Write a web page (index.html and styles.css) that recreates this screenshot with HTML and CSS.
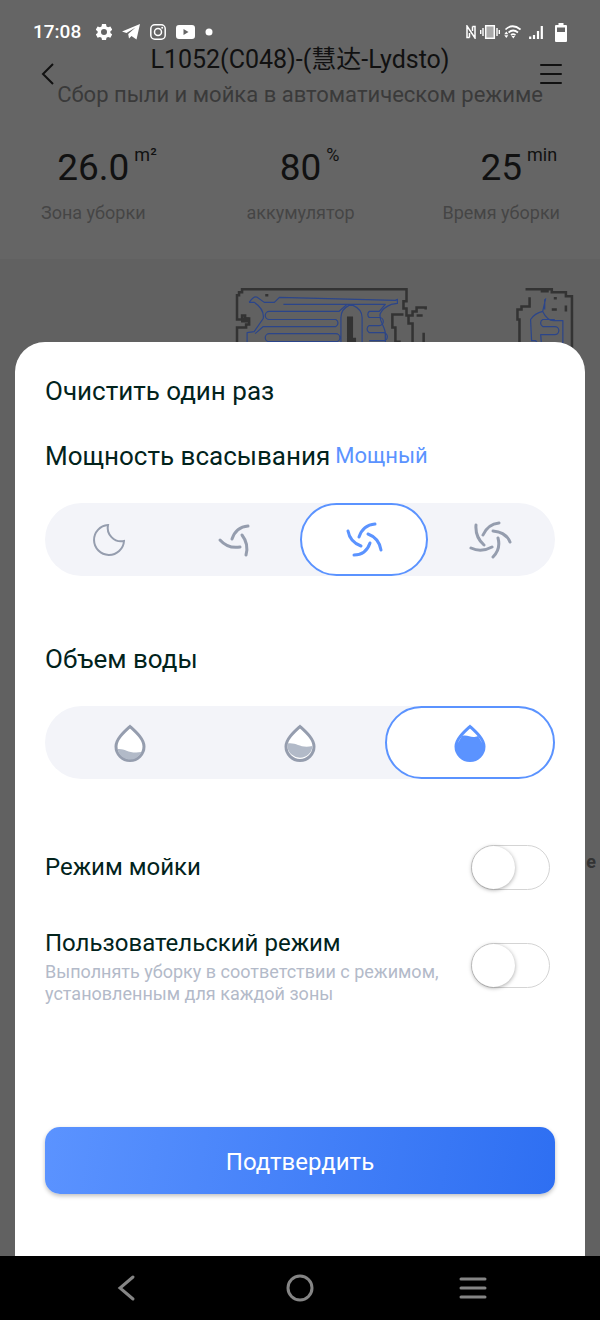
FILE: index.html
```
<!DOCTYPE html>
<html lang="ru">
<head>
    <meta charset="UTF-8">
    <meta name="viewport" content="width=device-width, initial-scale=1.0">
    <title>L1052(C048)</title>
    <link rel="stylesheet" href="styles.css">
</head>
<body>
    <div class="screen">
        <div class="app">
            <div class="status-bar">
                <div class="status-left">
                    <span>17:08</span>
                    <svg width="16" height="18" viewBox="0 0 16 18"><path fill="#fff" fill-rule="evenodd" d="M6 1h4l.5 2.4 1.6.9 2.3-.8 1.8 3.2-1.8 1.6v1.6l1.8 1.6-1.8 3.2-2.3-.8-1.6.9L10 17H6l-.5-2.2-1.6-.9-2.3.8-1.8-3.2 1.8-1.6V8.300L-.2 6.700l1.800-3.200 2.300.8 1.600-.9zM8 6a3 3 0 1 0 0 6 3 3 0 0 0 0-6z"/></svg>
                    <svg width="18" height="16" viewBox="0 0 18 16"><path fill="#fff" d="M0 7.500 18 0l-3.500 15.500-5-3.500L7 14.500 6.200 10l7.300-6.500L4.500 9z"/></svg>
                    <svg width="16" height="16" viewBox="0 0 16 16"><g fill="none" stroke="#fff" stroke-width="1.500"><rect x=".8" y=".8" width="14.400" height="14.400" rx="4"/><circle cx="8" cy="8" r="3.500"/></g><circle cx="12.200" cy="3.800" r="1" fill="#fff"/></svg>
                    <svg width="19" height="14" viewBox="0 0 19 14"><path fill="#fff" fill-rule="evenodd" d="M3 0h13q3 0 3 3v8q0 3-3 3H3q-3 0-3-3V3q0-3 3-3zM7.500 4v6l5-3z"/></svg>
                    <svg width="8" height="8" viewBox="0 0 8 8"><circle cx="4" cy="4" r="3.500" fill="#fff"/></svg>
                </div>
                <div class="status-right">
                    <svg width="10" height="14" viewBox="0 0 10 14"><path fill="none" stroke="#fff" stroke-width="1.500" d="M3.500 12.500H1V1l8 12V1.500H6.500M3.500 8v4.500M6.500 1.500V6"/></svg>
                    <svg width="20" height="14" viewBox="0 0 20 14"><rect x="5.700" y=".7" width="8.600" height="12.600" fill="#aaa" stroke="#fff" stroke-width="1.500"/><path stroke="#fff" stroke-width="1.400" d="M3 3v8M.7 5v4M17 3v8M19.300 5v4"/></svg>
                    <svg width="17" height="14" viewBox="0 0 17 14"><g fill="none" stroke="#fff" stroke-width="1.700"><path d="M1.500 4.500q7-6.500 15 0M4.500 7.500q4.500-4 9.500 0M7 10q2-1.600 4.500 0"/></g><path fill="#fff" d="M7.500 11h3.600l-1.800 2.500zM2.300 6.500l2 2.700h-4zM.3 10.300h4l-2 2.700z"/></svg>
                    <svg class="signal" width="14" height="13" viewBox="0 0 14 13"><path stroke="#fff" stroke-width="2.200" d="M1.200 10.500V13M5 9v4M9 5v8M12.800 0v13"/></svg>
                    <svg width="12" height="19" viewBox="0 0 12 19"><path fill="#fff" fill-rule="evenodd" d="M3.500 0h5v2H11q1 0 1 1v15q0 1-1 1H1q-1 0-1-1V3q0-1 1-1h2.500zM2 4.500V9h8V4.500z"/></svg>
                </div>
            </div>

            <header class="app-header">
                <button class="icon-button" aria-label="Назад">
                    <svg width="14" height="22" viewBox="0 0 14 22"><path fill="none" stroke="#111" stroke-width="2" d="M12 1 2 11l10 10"/></svg>
                </button>
                <div class="app-title">
                    <h1>L1052(C048)-(慧达-Lydsto)</h1>
                    <p>Сбор пыли и мойка в автоматическом режиме</p>
                </div>
                <button class="icon-button" aria-label="Меню">
                    <svg width="22" height="22" viewBox="0 0 22 22"><path stroke="#111" stroke-width="2" stroke-linecap="round" d="M1 2h20M1 11h20M1 20h20"/></svg>
                </button>
            </header>

            <div class="stats">
                <div class="stat">
                    <div class="stat-value">26.0<span>m²</span></div>
                    <div class="stat-label">Зона уборки</div>
                </div>
                <div class="stat">
                    <div class="stat-value">80<span>%</span></div>
                    <div class="stat-label">аккумулятор</div>
                </div>
                <div class="stat">
                    <div class="stat-value">25<span>min</span></div>
                    <div class="stat-label">Время уборки</div>
                </div>
            </div>

            <div class="map">
                <svg width="343" height="61" viewBox="0 0 340 60" fill="none">
                    <!-- walls -->
                    <g stroke="#333" stroke-width="2.500">
                        <path d="M2 60V40h9v-3h3v-6h-4v-3H7v4H2V8h2V5h3V2h163v12h-3v7h3v7h6v-4h4v-4h9v2"/>
                        <path d="M167 27h-11v13h3v14h4v6M172 28v8h4v22M180 57h7v-12M180 28h6"/>
                        <path d="M288 2h26v3h14v4h6v56M292 10v9h-8v3h-4v10h2v33M303 4h8M314 22h5M328 18v6"/>
                        <path d="M30 8h3M316 11h3"/>
                    </g>
                    <path fill="#333" d="M6 35h8v-5H6zM111 29h6v21h3v8h-9z"/>
                    <!-- cleaning path -->
                    <g stroke="#2b458a" stroke-width="1.200" stroke-linejoin="round">
                        <path d="M14 15q5-7 8-5l7 5h10l5-5 115 3 2-1v4l-6 1q-8 3-11 9c-2 7 5 13 5 20v14M14 15h5c6 4 10 9 9 16l-9 13-7 1v14"/>
                        <path d="M48 17h101l-6 7h-10a4 4 0 0 0 0 6h10a4 4 0 0 1 0 8h-10a4 4 0 0 0 0 7h14a4 4 0 0 1 0 8h-14"/>
                        <path d="M111 17l-8 7H34a4 4 0 0 0 0 8h66a4 4 0 0 1 0 7H28l-8 7M100 54a4 4 0 0 0 0-8H34a4 4 0 0 0 0 8h66M105 60V30q0-8 8-12h4q9 4 9 12v30"/>
                        <path d="M308 11l-3 13q-8 2-12 8l1 21h4l5 7M305 24q5 10 12 9h8v27M317 32h-12a4 4 0 0 0 0 7h12a4 4 0 0 1 0 8h-14l1 12M307 12v10"/>
                    </g>
                </svg>
                <span class="map-label">е</span>
            </div>
        </div>

        <form class="sheet">
            <h2>Очистить один раз</h2>

            <fieldset class="option">
                <legend>Мощность всасывания<span class="option-value">Мощный</span></legend>
                <div class="segments">
                    <label class="segment">
                        <input type="radio" name="power" aria-label="Тихий">
                        <svg class="moon" width="34" height="34" viewBox="0 0 34 34"><path d="M16 2C14 11 22 20 32 18A15 15 0 1 1 16 2z"/></svg>
                    </label>
                    <label class="segment">
                        <input type="radio" name="power" aria-label="Стандартный">
                        <svg class="fan" width="44" height="44" viewBox="0 0 44 44"><path d="M18 21Q22 9 34 8M6 22Q14 31 26 29M28 17Q35 26 32 37"/></svg>
                    </label>
                    <label class="segment">
                        <input type="radio" name="power" aria-label="Мощный" checked>
                        <svg class="fan" width="44" height="44" viewBox="0 0 44 44"><path d="M17 19Q21 7 33 6M6 13Q8 24 19 28M26 16Q37 20 39 32M28 25Q24 37 12 37"/></svg>
                    </label>
                    <label class="segment">
                        <input type="radio" name="power" aria-label="Максимальный">
                        <svg class="fan" width="44" height="44" viewBox="0 0 44 44"><path d="M14 17Q19 6 30 5M7 7Q6 19 15 27M24 13Q37 14 41 24M29 20Q32 31 24 39M2 30Q12 35 23 29"/></svg>
                    </label>
                </div>
            </fieldset>

            <fieldset class="option">
                <legend>Объем воды</legend>
                <div class="segments">
                    <label class="segment">
                        <input type="radio" name="water" aria-label="Мало">
                        <svg width="32" height="38" viewBox="0 0 32 38"><path class="drop" d="M16 2.500C10 8 2 15 2 22.500a14 14 0 0 0 28 0C30 15 22 8 16 2.500z"/><path class="water" d="M3.500 25C11 24 14 30 27.500 28A12.600 12.600 0 0 1 3.500 25z"/></svg>
                    </label>
                    <label class="segment">
                        <input type="radio" name="water" aria-label="Средне">
                        <svg width="32" height="38" viewBox="0 0 32 38"><path class="drop" d="M16 2.500C10 8 2 15 2 22.500a14 14 0 0 0 28 0C30 15 22 8 16 2.500z"/><path class="water" d="M3.500 19.500C13 18 16 25 28.500 22A12.600 12.600 0 0 1 3.400 22.500z"/></svg>
                    </label>
                    <label class="segment">
                        <input type="radio" name="water" aria-label="Много" checked>
                        <svg width="32" height="38" viewBox="0 0 32 38"><path class="drop" d="M16 2.500C10 8 2 15 2 22.500a14 14 0 0 0 28 0C30 15 22 8 16 2.500z"/><path class="water" d="M8 12c6-2 9 3 16 0l6 10a14 14 0 0 1-28 0z"/></svg>
                    </label>
                </div>
            </fieldset>

            <div class="switch-row">
                <label for="mop">Режим мойки</label>
                <input class="switch" type="checkbox" id="mop">
            </div>
            <div class="switch-row">
                <div>
                    <label for="custom">Пользовательский режим</label>
                    <p>Выполнять уборку в соответствии с режимом, установленным для каждой зоны</p>
                </div>
                <input class="switch" type="checkbox" id="custom">
            </div>

            <button class="confirm" type="button">Подтвердить</button>
        </form>
    </div>

    <nav class="nav-bar">
        <button class="icon-button" aria-label="Назад">
            <svg width="28" height="28" viewBox="0 0 28 28"><path d="M20 3 7 14l13 11"/></svg>
        </button>
        <button class="icon-button" aria-label="Домой">
            <svg width="28" height="28" viewBox="0 0 28 28"><circle cx="14" cy="14" r="12"/></svg>
        </button>
        <button class="icon-button" aria-label="Недавние">
            <svg width="28" height="28" viewBox="0 0 28 28"><path d="M2 5h24M2 14h24M2 23h24"/></svg>
        </button>
    </nav>
</body>
</html>
```
FILE: styles.css
```
* {
    box-sizing: border-box;
}
body {
    margin: 0;
    min-height: 100vh;
    display: flex;
    flex-direction: column;
    background-color: #656565;
    font-family: Roboto, "Noto Sans CJK SC", sans-serif;
}
h1, h2, p {
    margin: 0;
    font-weight: 400;
}
svg {
    display: block;
}
.icon-button {
    display: flex;
    padding: 0;
    border: none;
    background: none;
    cursor: pointer;
}

/* the sheet is stacked over the app in one grid cell */
.screen {
    flex: 1;
    display: grid;
}
.app, .sheet {
    grid-area: 1 / 1;
    min-width: 0;
}
.app {
    display: flex;
    flex-direction: column;
}

/* status bar */
.status-bar {
    display: flex;
    justify-content: space-between;
    padding: 20px 33px 0;
    color: white;
    font-size: 19px;
    line-height: 24px;
    font-weight: 500;
}
.status-left, .status-right {
    display: flex;
    align-items: center;
}
.status-left {
    gap: 10px;
}
.status-left span {
    margin-right: 5px;
}
.status-right {
    gap: 4px;
}
.signal {
    margin: 0 8px 0 4px;
}

/* header */
.app-header {
    display: flex;
    justify-content: space-between;
    align-items: center;
    padding: 0 38px 0 41px;
    color: #111;
}
.app-header .icon-button {
    padding-bottom: 10px;
}
.app-title {
    flex: 1;
    margin: 0 -20px;
    padding-left: 5px;
    text-align: center;
    white-space: nowrap;
}
.app-title h1 {
    font-size: 25px;
    line-height: 32px;
}
.app-title p {
    color: #3a3a3a;
    font-size: 22px;
    line-height: 38px;
}

/* stats */
.stats {
    display: grid;
    grid-template-columns: 1fr auto 1fr;
    padding: 32px 40px 32px 41px;
    text-align: center;
}
.stat:first-child {
    justify-self: start;
}
.stat:last-child {
    justify-self: end;
}
.stat-value {
    display: flex;
    justify-content: center;
    gap: 5px;
    padding-left: 5px;
    color: #111;
    font-size: 37px;
    line-height: 44px;
}
/* the unit hangs outside so that the number stays centred */
.stat-value span {
    width: 0;
    font-size: 18px;
    line-height: 18px;
}
.stat-label {
    margin-top: 9px;
    color: #454545;
    font-size: 18px;
    line-height: 28px;
}

/* map */
.map {
    flex: 1;
    display: flex;
    flex-direction: column;
    align-items: flex-end;
    padding: 28px 22px 0 0;
    background-color: #616161;
}
.map-label {
    margin: 502px -18px 0 0;
    color: #333;
    font-size: 18px;
    line-height: 24px;
    font-weight: 700;
}

/* bottom sheet */
.sheet {
    position: relative;
    align-self: end;
    margin: 0 15px;
    padding: 29px 30px 62px;
    background-color: white;
    border-radius: 30px 30px 0 0;
    color: #02231c;
    font-size: 26px;
    line-height: 40px;
}
.sheet h2 {
    font-size: 26px;
}
.option {
    margin: 25px 0 63px;
    padding: 0;
    border: none;
}
.option legend {
    display: flex;
    align-items: center;
    gap: 5px;
    padding: 0;
}
.option-value {
    color: #5b93ff;
    font-size: 22px;
}
.segments {
    display: flex;
    margin-top: 27px;
    background-color: #f3f4f9;
    border-radius: 37px;
}
.segment {
    flex: 1;
    display: flex;
    justify-content: center;
    align-items: center;
    height: 73px;
    border: 2px solid transparent;
    border-radius: 37px;
    cursor: pointer;
}
.segment input {
    appearance: none;
    width: 0;
    height: 0;
    margin: 0;
    border: none;
}
.segment svg {
    fill: none;
    stroke: #959dae;
    stroke-width: 3;
}
.segment .moon {
    stroke-width: 2;
}
.segment .fan {
    stroke-linecap: round;
}
.segment .drop {
    fill: white;
}
.segment .water {
    fill: #b2bac8;
    stroke: none;
}
.segment:has(input:checked) {
    background-color: white;
    border-color: #5b93ff;
}
.segment:has(input:checked) svg {
    stroke: #5b93ff;
}
.segment:has(input:checked) .water {
    fill: #5b93ff;
}

.switch-row {
    display: flex;
    justify-content: space-between;
    align-items: center;
    margin: 66px 0 36px;
    padding-right: 5px;
}
.switch-row + .switch-row {
    margin-top: 36px;
}
.switch-row label {
    display: block;
    font-size: 24px;
    line-height: 35px;
}
.switch-row p {
    color: #b3bac9;
    font-size: 18px;
    line-height: 22px;
}
.switch {
    appearance: none;
    flex: none;
    width: 79px;
    height: 45px;
    margin: 0;
    border: 1px solid #d4d4d4;
    border-radius: 23px;
    background-color: white;
    cursor: pointer;
}
.switch::before {
    content: "";
    display: block;
    width: 43px;
    height: 43px;
    border-radius: 50%;
    background-color: white;
    box-shadow: 0 1px 4px rgba(0, 0, 0, 0.35);
}
.switch:checked::before {
    margin-left: auto;
}

.confirm {
    display: block;
    width: 100%;
    height: 67px;
    margin-top: 122px;
    padding: 3px 0 0;
    border: none;
    border-radius: 15px;
    background: linear-gradient(100deg, #5b93ff, #2e6ff2);
    box-shadow: 0 2px 4px rgba(0, 0, 0, 0.25);
    color: white;
    font-family: inherit;
    font-size: 24px;
    cursor: pointer;
}

/* system navigation */
.nav-bar {
    display: flex;
    justify-content: space-between;
    align-items: center;
    height: 64px;
    padding: 0 113px;
    background-color: black;
}
.nav-bar svg {
    fill: none;
    stroke: #858585;
    stroke-width: 3;
    stroke-linecap: round;
}
```
